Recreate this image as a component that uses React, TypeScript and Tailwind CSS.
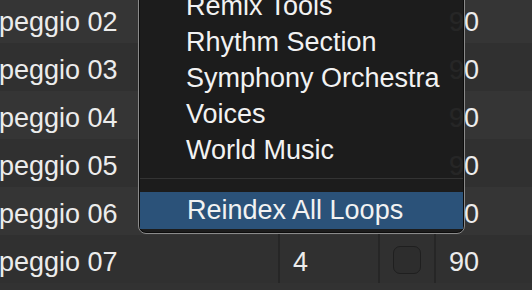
import React from "react";

const rows = ["02", "03", "04", "05", "06", "07"];

export default function App() {
  return (
    <div
      className="relative w-[532px] h-[290px] overflow-hidden bg-[#323232] text-[#ececec]"
      style={{ fontFamily: '"Liberation Sans", Arial, sans-serif' }}
    >
      <div className="flex flex-col mt-[-5px]">
        {rows.map((r, i) => {
          const last = i === rows.length - 1;
          return (
            <div
              key={r}
              className={`flex h-[48px] text-[27px] leading-[48px] ${i % 2 === 0 ? "bg-[#353535]" : "bg-[#303030]"}`}
            >
              <div className="w-[278px] shrink-0 pt-[3px] whitespace-nowrap overflow-hidden">
                <span className="ml-[-28px]">Arpeggio {r}</span>
              </div>
              <div className="w-[2px] shrink-0 bg-[#262626]" />
              <div className="w-[98px] shrink-0 pl-[13px] pt-[3px]">{last ? "4" : ""}</div>
              <div className="w-[2px] shrink-0 bg-[#262626]" />
              <div className="w-[54px] shrink-0 flex items-center justify-center pt-[1px]">
                {last && (
                  <div className="w-[28px] h-[28px] rounded-[7px] bg-[#2d2d2d] border border-[#1f1f1f]" />
                )}
              </div>
              <div className="w-[2px] shrink-0 bg-[#262626]" />
              <div className="flex-1 pl-[13px] pt-[3px]">90</div>
            </div>
          );
        })}
      </div>

      <div className="absolute left-[138px] top-[-13px] w-[327px] rounded-[8px] border border-[#8a8a8a] bg-[rgba(27,27,27,0.95)] shadow-[inset_0_0_0_1px_#0c0c0c] text-[27px] text-[#f2f2f2]">
        <div className="flex flex-col">
          {["Remix Tools", "Rhythm Section", "Symphony Orchestra", "Voices", "World Music"].map((t) => (
            <div key={t} className="h-[36px] leading-[36px] pl-[47px] whitespace-nowrap">
              {t}
            </div>
          ))}
          <div className="h-[24px] flex flex-col pt-[10px]">
            <div className="h-[1px] bg-[#333333] mx-[1px]" />
          </div>
          <div className="h-[37px] leading-[37px] pl-[47px] bg-[#2b5279] mx-[1px] whitespace-nowrap">
            Reindex All Loops
          </div>
          <div className="h-[4px]" />
        </div>
      </div>
    </div>
  );
}
